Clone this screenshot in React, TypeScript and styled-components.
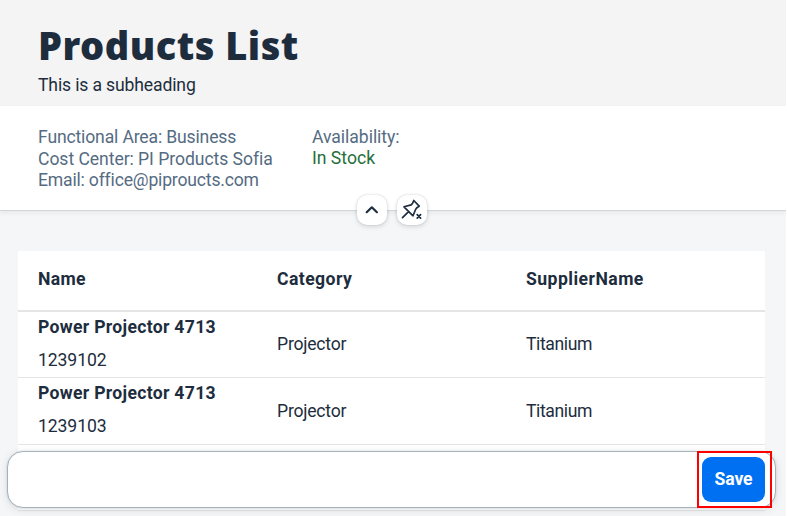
import React from 'react';
import styled, { createGlobalStyle } from 'styled-components';

const GlobalStyle = createGlobalStyle`
  * { box-sizing: border-box; }
  body { margin: 0; background: #fff; overflow: hidden; font-family: Roboto, "Liberation Sans", sans-serif; }
`;

const Page = styled.div`
  width: 786px;
  height: 516px;
  overflow: hidden;
  position: relative;
  background: #f5f6f7;
  color: #1d2d3e;
  font-size: 17.6px;
`;

const TitleArea = styled.header`
  height: 106px;
  padding: 22px 38px 0;
  background: #f4f4f4;
`;

const Title = styled.h1`
  margin: 0;
  width: max-content;
  font: 900 38px/46px "Noto Sans", "Open Sans", sans-serif;
  letter-spacing: 0.5px;
`;

const Text = styled.div<{ $spacing?: number; $bold?: boolean; $tone?: string; $line?: number }>`
  width: max-content;
  line-height: ${p => p.$line ?? 22}px;
  letter-spacing: ${p => p.$spacing ?? 0}px;
  font-weight: ${p => (p.$bold ? 700 : 400)};
  color: ${p => p.$tone ?? 'inherit'};
`;

const Subtitle = styled(Text)`
  margin-top: 6px;
`;

const HeaderContent = styled.section`
  position: relative;
  height: 105px;
  padding: 20px 38px 0;
  display: grid;
  grid-template-columns: 274px 1fr;
  align-content: start;
  background: #fff;
  border-bottom: 1px solid #d3d7d9;
  box-shadow: 0 2px 4px rgba(34, 53, 72, 0.07);
`;

const HeaderActions = styled.div`
  position: absolute;
  left: 357px;
  top: 89px;
  display: flex;
  gap: 10px;
`;

const RoundButton = styled.button`
  width: 30px;
  height: 30px;
  padding: 0;
  display: grid;
  place-items: center;
  border: 0;
  border-radius: 10px;
  background: #fff;
  color: #1d2d3e;
  box-shadow: 0 0 2px rgba(34, 53, 72, 0.22), 0 2px 5px rgba(34, 53, 72, 0.14);
`;

const Table = styled.main`
  margin: 40px 21px 0 18px;
  background: #fff;
`;

const Row = styled.div<{ $height: number; $head?: boolean; $inset?: number }>`
  display: grid;
  grid-template-columns: 239px 249px 1fr;
  align-items: center;
  height: ${p => p.$height}px;
  padding: 0 20px ${p => p.$inset ?? 0}px;
  border-bottom: ${p => (p.$head ? 2 : 1)}px solid #e5e5e5;
`;

const NameCell = styled.div`
  display: grid;
  gap: 11px;
  align-self: start;
  padding-top: 4px;
`;

const Footer = styled.footer`
  position: absolute;
  left: 7px;
  top: 451px;
  width: 769px;
  height: 57px;
  padding-right: 10px;
  display: flex;
  align-items: center;
  justify-content: flex-end;
  background: #fff;
  border: 1px solid #a5b1bb;
  border-radius: 16px;
  box-shadow: 0 0 2px rgba(34, 53, 72, 0.15), 0 2px 8px rgba(34, 53, 72, 0.12);
`;

const SaveButton = styled.button`
  width: 63px;
  height: 45px;
  padding: 0 0 2px;
  border: 0;
  border-radius: 9px;
  background: #0070f2;
  color: #fff;
  font: 700 17.6px/22px Roboto, sans-serif;
  letter-spacing: -0.15px;
`;

const Highlight = styled.div`
  position: absolute;
  left: 697px;
  top: 451px;
  width: 75px;
  height: 57px;
  border: 2px solid #f00;
`;

const products = [
  { name: 'Power Projector 4713', id: '1239102', category: 'Projector', supplier: 'Titanium', height: 66, inset: 1 },
  { name: 'Power Projector 4713', id: '1239103', category: 'Projector', supplier: 'Titanium', height: 67, inset: 0 },
];

const muted = '#556b82';

export default function App() {
  return (
    <Page>
      <GlobalStyle />
      <TitleArea>
        <Title>Products List</Title>
        <Subtitle $spacing={-0.15}>This is a subheading</Subtitle>
      </TitleArea>
      <HeaderContent>
        <div>
          <Text $tone={muted} $spacing={-0.16}>Functional Area: Business</Text>
          <Text $tone={muted} $spacing={-0.06}>Cost Center: PI Products Sofia</Text>
          <Text $tone={muted} $spacing={-0.19} $line={21}>Email: office@piproucts.com</Text>
        </div>
        <div>
          <Text $tone={muted} $spacing={-0.05}>Availability:</Text>
          <Text $tone="#256f3a" $line={21}>In Stock</Text>
        </div>
        <HeaderActions>
          <RoundButton aria-label="Collapse header">
            <svg width="20" height="20" viewBox="0 0 20 20" fill="none" stroke="currentColor" strokeWidth="2.2" strokeLinecap="round" strokeLinejoin="round">
              <path d="M4.7 12.2 9.8 7.3 14.9 12.2" />
            </svg>
          </RoundButton>
          <RoundButton aria-label="Unpin header">
            <svg width="22" height="22" viewBox="0 0 22 22" fill="none" stroke="currentColor" strokeWidth="1.7" strokeLinecap="round" strokeLinejoin="round">
              <path d="M12.8 1.5 18.2 7.2 16.2 8.4 14.7 10.2 12 16.8 3 7.8 10.2 5.9 11.6 4.2Z M7.6 12.7 1.5 18.6" />
              <path d="M16.2 15.6 19.6 19.2 M19.6 15.6 16.2 19.2" />
            </svg>
          </RoundButton>
        </HeaderActions>
      </HeaderContent>
      <Table>
        <Row $head $height={61} $inset={3}>
          <Text $bold $spacing={0.3}>Name</Text>
          <Text $bold $spacing={0.42}>Category</Text>
          <Text $bold $spacing={0.46}>SupplierName</Text>
        </Row>
        {products.map(p => (
          <Row key={p.id} $height={p.height} $inset={p.inset}>
            <NameCell>
              <Text $bold $spacing={0.3}>{p.name}</Text>
              <Text $spacing={-0.1}>{p.id}</Text>
            </NameCell>
            <Text $spacing={-0.22}>{p.category}</Text>
            <Text $spacing={-0.4}>{p.supplier}</Text>
          </Row>
        ))}
        <Row $height={66} />
      </Table>
      <Footer>
        <SaveButton>Save</SaveButton>
      </Footer>
      <Highlight />
    </Page>
  );
}
